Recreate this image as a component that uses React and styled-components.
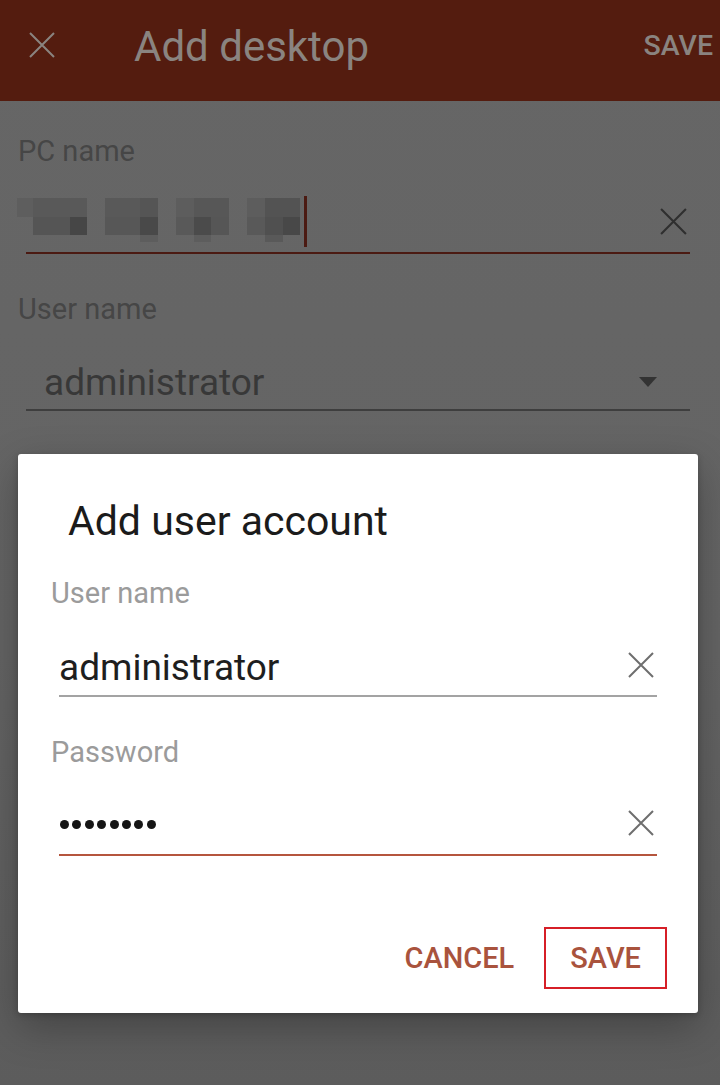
import React from 'react';
import styled, { createGlobalStyle } from 'styled-components';

const GlobalStyle = createGlobalStyle`
  html, body {
    margin: 0;
    padding: 0;
    background: #5f5f5f;
  }
  * { box-sizing: border-box; }
`;

// mosaic blur over the hidden PC name: [x, y, w, h, colour]
const mosaic = [
  [5, 9, 16, 19, '#5e5e5e'], [21, 9, 54, 19, '#595959'],
  [21, 28, 37, 18, '#555555'], [58, 28, 17, 18, '#464646'],
  [93, 9, 35, 19, '#595959'], [128, 9, 18, 19, '#555555'],
  [93, 28, 35, 18, '#575757'], [128, 28, 18, 18, '#494949'], [128, 46, 18, 7, '#5d5d5d'],
  [164, 9, 18, 19, '#5d5d5d'], [182, 9, 35, 19, '#575757'],
  [164, 28, 18, 18, '#595959'], [182, 28, 17, 18, '#4b4b4b'], [199, 28, 18, 18, '#565656'], [182, 46, 17, 7, '#5d5d5d'],
  [235, 9, 18, 19, '#5d5d5d'], [253, 9, 35, 19, '#535353'],
  [235, 28, 18, 18, '#595959'], [253, 28, 18, 18, '#505050'], [271, 28, 17, 18, '#484848'], [253, 46, 18, 7, '#595959'],
];

const Screen = styled.div`
  position: relative;
  width: 720px;
  height: 1085px;
  overflow: hidden;
  background: linear-gradient(#666666 0%, #646464 60%, #5c5c5c 100%);
  font-family: Roboto, "Liberation Sans", sans-serif;
`;

const AppBar = styled.header`
  height: 101px;
  background: #541c0f;
  display: flex;
  align-items: flex-start;
  padding: 26px 7px 0 28px;
  color: #8a8480;
`;

const IconBox = styled.span`
  display: flex;
  margin-top: ${({ top }) => top || 0}px;
  margin-bottom: ${({ bottom }) => bottom || 0}px;
  color: ${({ color }) => color};
`;

const BarTitle = styled.h1`
  margin: 0 0 0 78px;
  font-size: 42px;
  line-height: 42px;
  font-weight: 400;
`;

const BarAction = styled.span`
  margin: 6px 0 0 auto;
  font-size: 28.5px;
  line-height: 28px;
  font-weight: 500;
`;

const Form = styled.div`
  padding: 36px 30px 0 18px;
`;

const Label = styled.div`
  font-size: 29px;
  line-height: 29px;
  color: ${({ dim }) => (dim ? '#464646' : '#9b9b9b')};
  margin-top: ${({ gap }) => gap}px;
`;

const InputRow = styled.div`
  display: flex;
  align-items: flex-end;
  margin-left: 8px;
  height: ${({ h }) => h}px;
  border-bottom: 2px solid ${({ line }) => line};
  padding-right: ${({ pr }) => pr || 2}px;
  padding-bottom: ${({ pb }) => pb || 0}px;
`;

const Mosaic = styled.span`
  flex: 1;
  display: flex;
  align-items: flex-end;
  margin-left: -14px;
  svg { display: block; margin-bottom: 10px; }
`;

const Cursor = styled.span`
  width: 3px;
  height: 51px;
  background: #4b1a12;
  margin-bottom: 5px;
`;

const Value = styled.span`
  flex: 1;
  font-size: 37px;
  line-height: 37px;
  color: ${({ color }) => color};
  padding-left: ${({ pl }) => pl || 0}px;
`;

const Dots = styled.span`
  flex: 1;
  display: flex;
  gap: 3.4px;
  margin-bottom: 25px;
  padding-left: 1px;
`;

const Dot = styled.span`
  width: 9px;
  height: 9px;
  border-radius: 50%;
  background: #151515;
`;

const Dialog = styled.div`
  position: absolute;
  top: 454px;
  left: 18px;
  width: 680px;
  height: 559px;
  background: #ffffff;
  border-radius: 3px;
  box-shadow: 0 14px 40px rgba(0, 0, 0, 0.28), 0 2px 6px rgba(0, 0, 0, 0.2);
  padding: 47px 41px 0 33px;
  display: flex;
  flex-direction: column;
`;

const DialogTitle = styled.h2`
  margin: 0 0 0 17px;
  font-size: 41px;
  line-height: 41px;
  font-weight: 400;
  color: #1b1b1b;
`;

const Actions = styled.div`
  margin-top: auto;
  margin-right: -10px;
  margin-bottom: 24px;
  display: flex;
  justify-content: flex-end;
  gap: 4px;
`;

const ActionButton = styled.button`
  border: 2px solid ${({ marked }) => (marked ? '#d61f27' : 'transparent')};
  background: transparent;
  padding: 0 24px;
  height: 62px;
  font-family: Roboto, "Liberation Sans", sans-serif;
  font-size: 29px;
  line-height: 29px;
  font-weight: 500;
  color: #a9533d;
`;

const Cross = ({ size = 28, width = 2 }) => (
  <svg width={size} height={size} viewBox="0 0 28 28" fill="none" stroke="currentColor" strokeWidth={width}>
    <path d="M2 2 L26 26 M26 2 L2 26" />
  </svg>
);

const Caret = () => (
  <svg width="18" height="10" viewBox="0 0 18 10">
    <path d="M0 0 H18 L9 10 Z" fill="#333" />
  </svg>
);

export default function App() {
  return (
    <Screen>
      <GlobalStyle />
      <AppBar>
        <IconBox top={5}><Cross /></IconBox>
        <BarTitle>Add desktop</BarTitle>
        <BarAction>SAVE</BarAction>
      </AppBar>

      <Form>
        <Label dim gap={0}>PC name</Label>
        <InputRow h={88} line="#4b1a12">
          <Mosaic>
            <svg width="292" height="53" viewBox="0 0 292 53">
              {mosaic.map(([x, y, w, h, c], i) => (
                <rect key={i} x={x} y={y} width={w} height={h} fill={c} />
              ))}
            </svg>
            <Cursor />
          </Mosaic>
          <IconBox color="#2f2f2f" bottom={16}><Cross size={29} /></IconBox>
        </InputRow>

        <Label dim gap={41}>User name</Label>
        <InputRow h={87} line="#3e3e3e" pr={33} pb={8}>
          <Value color="#383838" pl={18}>administrator</Value>
          <IconBox bottom={14}><Caret /></IconBox>
        </InputRow>
      </Form>

      <Dialog>
        <DialogTitle>Add user account</DialogTitle>
        <Label gap={37}>User name</Label>
        <InputRow h={89} line="#a3a3a3" pb={9}>
          <Value color="#1e1e1e">administrator</Value>
          <IconBox color="#6e6e6e" bottom={7}><Cross /></IconBox>
        </InputRow>
        <Label gap={41}>Password</Label>
        <InputRow h={89} line="#b5553d">
          <Dots>
            {Array.from({ length: 8 }, (_, i) => <Dot key={i} />)}
          </Dots>
          <IconBox color="#6e6e6e" bottom={17}><Cross /></IconBox>
        </InputRow>
        <Actions>
          <ActionButton>CANCEL</ActionButton>
          <ActionButton marked>SAVE</ActionButton>
        </Actions>
      </Dialog>
    </Screen>
  );
}
